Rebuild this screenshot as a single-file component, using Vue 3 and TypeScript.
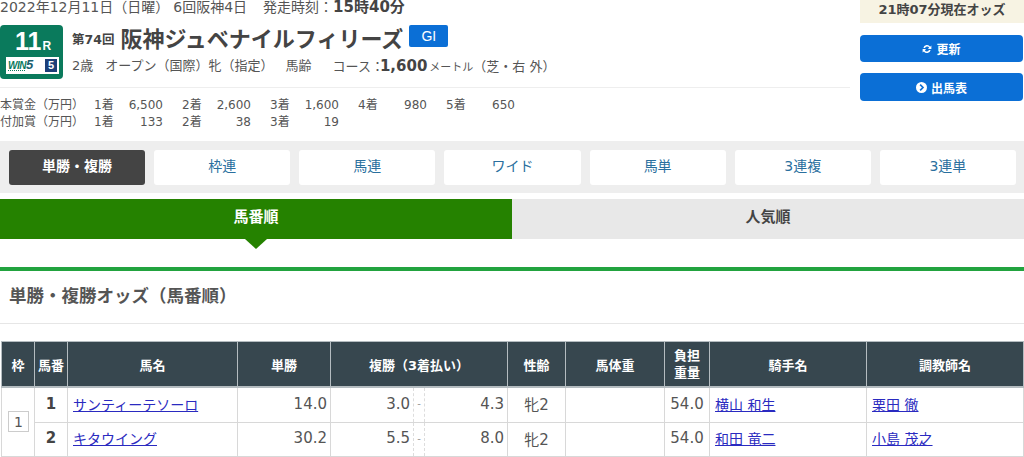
<template>
  <div class="page">
    <header class="head">
      <div class="head-main">
        <p class="date-line">
          <span class="date">2022年12月11日（日曜）</span>
          <span>6回阪神4日</span>
          <span>発走時刻：<b>15時40分</b></span>
        </p>
        <div class="race">
          <div class="race-no">
            <div class="race-num">11<small>R</small></div>
            <div class="win5">
              <i><u>WIN</u>5</i>
              <em>5</em>
            </div>
          </div>
          <div class="race-info">
            <h1 class="race-title">
              <small>第74回</small>
              <span>阪神ジュベナイルフィリーズ</span>
              <span class="grade">GI</span>
            </h1>
            <p class="race-cond">
              <span>2歳</span>
              <span>オープン（国際）牝（指定）</span>
              <span>馬齢</span>
              <span class="course">コース：<b>1,600</b><small>メートル</small>（芝・右 外）</span>
            </p>
          </div>
        </div>
        <div class="prizes">
          <div v-for="row in prizes" :key="row.label" class="prize-row">
            <span class="prize-label">{{ row.label }}</span>
            <template v-for="(v, i) in row.values" :key="i">
              <span class="prize-rank">{{ i + 1 }}着</span>
              <span class="prize-value">{{ v }}</span>
            </template>
          </div>
        </div>
      </div>
      <aside class="head-side">
        <div class="now">21時07分現在オッズ</div>
        <button class="side-btn">
          <svg viewBox="0 0 16 16" width="10" height="10">
            <path d="M2.2 6.4A6 6 0 0 1 13 4.2L15 2.4V8H9.4l2-2a3.6 3.6 0 0 0-6.6.4zM13.8 9.6A6 6 0 0 1 3 11.8L1 13.6V8h5.6l-2 2a3.6 3.6 0 0 0 6.6-.4z" fill="#fff" />
          </svg>
          更新
        </button>
        <button class="side-btn">
          <svg viewBox="0 0 16 16" width="11" height="11">
            <circle cx="8" cy="8" r="8" fill="#fff" />
            <path d="M6 3.8 10.2 8 6 12.2" fill="none" stroke="#0b6fd6" stroke-width="2.4" />
          </svg>
          出馬表
        </button>
      </aside>
    </header>

    <nav class="bet-tabs">
      <a v-for="(t, i) in betTabs" :key="t" class="bet-tab" :class="{ active: i === 0 }">{{ t }}</a>
    </nav>

    <div class="order-tabs">
      <div class="order-tab active">馬番順</div>
      <div class="order-tab">人気順</div>
    </div>

    <section class="odds">
      <h2 class="odds-title">単勝・複勝オッズ（馬番順）</h2>
      <table class="odds-table">
        <colgroup>
          <col v-for="(w, i) in colWidths" :key="i" :style="{ width: w + 'px' }" />
        </colgroup>
        <thead>
          <tr>
            <th>枠</th>
            <th>馬番</th>
            <th>馬名</th>
            <th>単勝</th>
            <th colspan="3">複勝（3着払い）</th>
            <th>性齢</th>
            <th>馬体重</th>
            <th class="two-line">負担<br />重量</th>
            <th>騎手名</th>
            <th>調教師名</th>
          </tr>
        </thead>
        <tbody>
          <tr v-for="(h, i) in horses" :key="h.no">
            <td v-if="i === 0" rowspan="2" class="waku"><span>1</span></td>
            <td class="no">{{ h.no }}</td>
            <td class="link"><a href="#">{{ h.name }}</a></td>
            <td class="num win">{{ h.win }}</td>
            <td class="num place-l">{{ h.low }}</td>
            <td class="dash">-</td>
            <td class="num place-r">{{ h.high }}</td>
            <td class="center">牝2</td>
            <td></td>
            <td class="center">54.0</td>
            <td class="link"><a href="#">{{ h.jockey }}</a></td>
            <td class="link"><a href="#">{{ h.trainer }}</a></td>
          </tr>
        </tbody>
      </table>
    </section>
  </div>
</template>

<script setup lang="ts">
const prizes = [
  { label: "本賞金（万円）", values: ["6,500", "2,600", "1,600", "980", "650"] },
  { label: "付加賞（万円）", values: ["133", "38", "19"] },
];

const betTabs = ["単勝・複勝", "枠連", "馬連", "ワイド", "馬単", "3連複", "3連単"];

const colWidths = [33, 33, 170, 93, 83, 11, 83, 58, 99, 45, 157, 157];

const horses = [
  { no: 1, name: "サンティーテソーロ", win: "14.0", low: "3.0", high: "4.3", jockey: "横山 和生", trainer: "栗田 徹" },
  { no: 2, name: "キタウイング", win: "30.2", low: "5.5", high: "8.0", jockey: "和田 竜二", trainer: "小島 茂之" },
];
</script>

<style>
html,
body {
  margin: 0;
  background: #fff;
}
</style>

<style scoped>
.page {
  width: 1024px;
  height: 457px;
  overflow: hidden;
  background: #fff;
  color: #555;
  font-family: "DejaVu Sans", "Noto Sans CJK JP", sans-serif;
  font-size: 12px;
}
p,
h1,
h2 {
  margin: 0;
  font-weight: normal;
}

.head {
  display: flex;
  height: 141px;
}
.head-main {
  width: 860px;
  padding-right: 10px;
  box-sizing: border-box;
}
.date-line {
  display: flex;
  gap: 16px;
  height: 14px;
  line-height: 14px;
  font-size: 14px;
  white-space: nowrap;
}
.date {
  margin-right: -12px;
}
.date-line b {
  color: #444;
  font-size: 15px;
}
.race {
  display: flex;
  margin-top: 11px;
  height: 62px;
  border-bottom: 1px solid #eee;
}
.race-no {
  width: 63px;
  height: 54px;
  border-radius: 4px;
  background: #0a7a5c;
  box-sizing: border-box;
  padding: 3px 4px 0 6px;
}
.race-num {
  height: 29px;
  line-height: 26px;
  padding-left: 1px;
  text-align: center;
  color: #fff;
  font-family: "Liberation Sans", sans-serif;
  font-weight: bold;
  font-size: 25px;
}
.race-num small {
  font-size: 12px;
  margin-left: 1px;
}
.win5 {
  display: flex;
  align-items: center;
  justify-content: space-between;
  height: 17px;
  padding: 0 2px;
  background: #fff;
}
.win5 i {
  font-family: "Liberation Sans", sans-serif;
  font-weight: bold;
  font-size: 13px;
  line-height: 14px;
  color: #1c5f6e;
  letter-spacing: -0.5px;
}
.win5 u {
  font-size: 10px;
  color: #0a7a5c;
  text-decoration: underline dotted 1px;
  text-underline-offset: 1px;
}
.win5 em {
  width: 12px;
  height: 13px;
  line-height: 13px;
  text-align: center;
  background: #1c3f78;
  color: #fff;
  font-style: normal;
  font-family: "Liberation Sans", sans-serif;
  font-weight: bold;
  font-size: 11px;
}
.race-info {
  margin-left: 9px;
}
.race-title {
  display: flex;
  align-items: center;
  height: 24px;
  color: #444;
  font-weight: bold;
  font-size: 22px;
  white-space: nowrap;
}
.race-title small {
  font-size: 12.5px;
  margin-right: 6px;
  margin-top: 2px;
}
.grade {
  width: 39px;
  height: 22px;
  line-height: 22px;
  margin: -2px 0 0 6px;
  text-align: center;
  border-radius: 2px;
  background: #0b6fd6;
  color: #fff;
  font-family: "Liberation Sans", sans-serif;
  font-weight: normal;
  font-size: 14px;
}
.race-cond {
  display: flex;
  gap: 12px;
  margin-top: 8px;
  line-height: 18px;
  font-size: 13px;
  white-space: nowrap;
}
.course {
  margin-left: 9px;
}
.course b {
  margin-left: -4px;
  color: #444;
  font-size: 15px;
}
.course small {
  font-size: 11px;
  margin-left: 2px;
}
.prizes {
  margin-top: 9px;
  font-size: 12px;
  line-height: 17px;
}
.prize-row {
  display: flex;
  white-space: nowrap;
}
.prize-label {
  width: 94px;
}
.prize-rank {
  width: 24px;
}
.prize-value {
  width: 45px;
  margin-right: 19px;
  text-align: right;
}

.head-side {
  width: 164px;
}
.now {
  height: 23px;
  line-height: 20px;
  text-align: center;
  background: #f7f3e3;
  color: #444;
  font-weight: bold;
  font-size: 13px;
}
.side-btn {
  display: flex;
  align-items: center;
  justify-content: center;
  gap: 4px;
  width: 163px;
  height: 27px;
  margin-top: 12px;
  padding: 0;
  border: 0;
  border-radius: 4px;
  background: #0b6fd6;
  color: #fff;
  font-family: inherit;
  font-weight: bold;
  font-size: 12px;
}
.side-btn + .side-btn {
  height: 28px;
  margin-top: 11px;
}

.bet-tabs {
  display: flex;
  gap: 9px;
  height: 52px;
  padding: 9px 8px 8px 9px;
  box-sizing: border-box;
  background: #eee;
}
.bet-tab {
  flex: 1;
  line-height: 33px;
  text-align: center;
  border-radius: 3px;
  background: #fff;
  color: #2a6f9e;
  font-size: 14px;
}
.bet-tab.active {
  background: #444;
  color: #fff;
  font-weight: bold;
}

.order-tabs {
  display: flex;
  margin-top: 6px;
  height: 40px;
  padding-bottom: 28px;
  border-bottom: 4px solid #22a33f;
}
.order-tab {
  position: relative;
  flex: 1;
  line-height: 37px;
  text-align: center;
  background: #e8e8e8;
  color: #444;
  font-weight: bold;
  font-size: 15px;
}
.order-tab.active {
  background: #258200;
  color: #fff;
}
.order-tab.active::after {
  content: "";
  position: absolute;
  left: 50%;
  top: 100%;
  margin-left: -11px;
  border-style: solid;
  border-width: 10px 11px 0;
  border-color: #258200 transparent transparent;
}

.odds-title {
  height: 53px;
  line-height: 50px;
  padding-left: 9px;
  border-bottom: 1px solid #e6e6e6;
  box-sizing: border-box;
  color: #555;
  font-weight: bold;
  font-size: 17.5px;
}
.odds-table {
  margin: 17px 0 0 1px;
  width: 1022px;
  table-layout: fixed;
  border-collapse: collapse;
}
.odds-table th {
  height: 44px;
  padding: 0;
  background: #37474f;
  border: 1px solid #b4bcc0;
  border-bottom-width: 2px;
  color: #fff;
  font-weight: bold;
  font-size: 13px;
}
.odds-table th.two-line {
  line-height: 17px;
}
.odds-table td {
  height: 34px;
  padding: 0 0 2px;
  border: 1px solid #d8d8d8;
  font-size: 15px;
  box-sizing: border-box;
}
.odds-table tbody tr:first-child td {
  height: 35px;
}
.odds-table td.waku {
  padding: 0;
}
.waku span {
  display: block;
  width: 21px;
  height: 21px;
  margin-left: 6px;
  line-height: 20px;
  box-sizing: border-box;
  border: 1px solid #ccc;
  text-align: center;
  font-size: 14px;
}
.no {
  text-align: center;
  font-weight: bold;
  color: #444;
}
.odds-table td.link {
  padding-left: 5px;
  font-size: 14px;
}
.link a {
  color: #2a2ac0;
}
.num {
  text-align: right;
}
.odds-table td.win {
  padding-right: 3px;
}
.odds-table td.place-l {
  padding-right: 3px;
  border-right: 0;
}
.odds-table td.dash {
  text-align: center;
  font-size: 10px;
  color: #999;
  border-left: 1px dashed #ddd;
  border-right: 1px dashed #ddd;
}
.odds-table td.place-r {
  padding-right: 3px;
  border-left: 0;
}
.center {
  text-align: center;
}
</style>
